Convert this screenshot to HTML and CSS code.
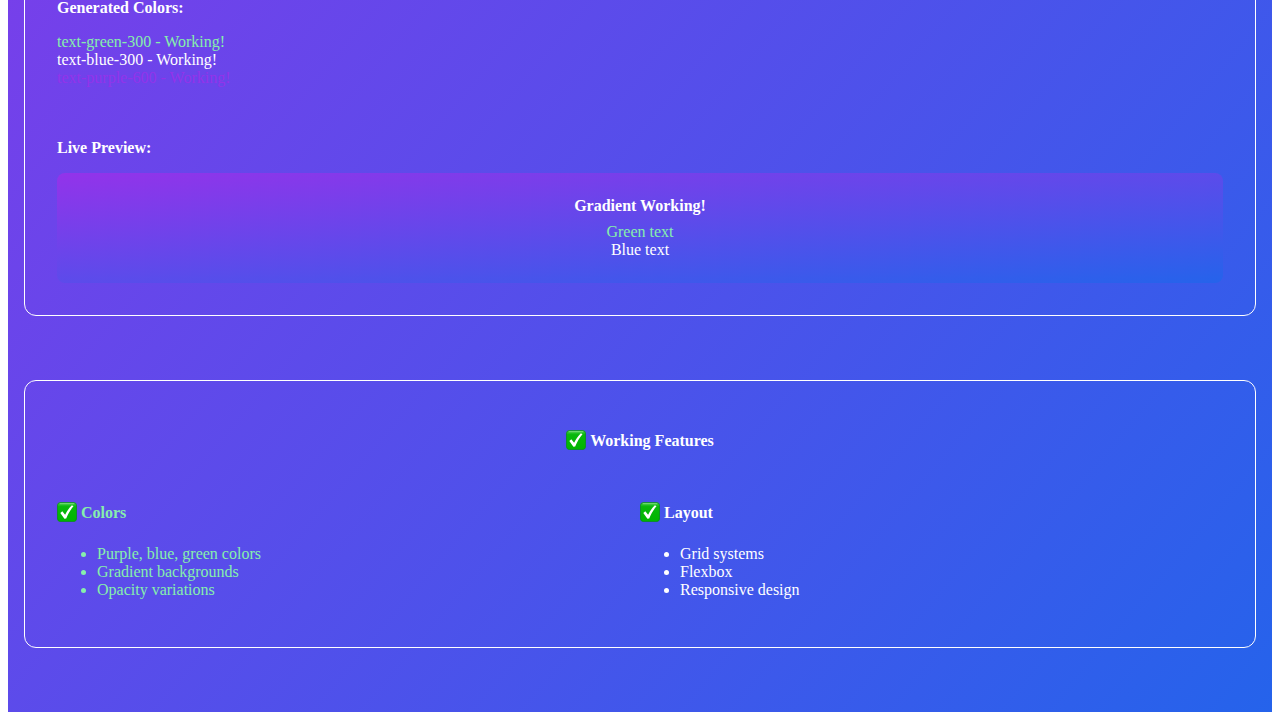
FILE: index.html
```html
<!DOCTYPE html>
<html lang="en">
<head>
<meta charset="utf-8">
<title>Working Features</title>
<link rel="stylesheet" href="styles.css">
</head>
<body>
<svg class="defs" aria-hidden="true">
  <defs>
    <linearGradient id="tile" x1="0" y1="0" x2="0" y2="1">
      <stop offset="0" stop-color="#4fd052"/>
      <stop offset=".22" stop-color="#08b80c"/>
      <stop offset="1" stop-color="#00b500"/>
    </linearGradient>
    <symbol id="check" viewBox="0 0 20 20">
      <rect x=".4" y=".4" width="19.2" height="19.2" rx="3.4" fill="url(#tile)" stroke="#078f16" stroke-width=".8"/>
      <path d="M3.2 1.7H16.8" stroke="#7bdc7b" stroke-width=".9" stroke-linecap="round"/>
      <path d="M3.3 11 5.3 9.3 8.1 12.7C9.9 9.1 12 6.1 14.9 3.2L16.5 4.3C13.4 7.8 11 11.9 9.2 16.6L7.4 16.7Z" fill="#fff"/>
    </symbol>
  </defs>
</svg>
<main class="page">
  <section class="card card-demo">
    <h4 class="title">Generated Colors:</h4>
    <div class="samples">
      <div class="green">text-green-300 - Working!</div>
      <div>text-blue-300 - Working!</div>
      <div class="purple">text-purple-600 - Working!</div>
    </div>
    <h4 class="title">Live Preview:</h4>
    <div class="preview">
      <div class="preview-title">Gradient Working!</div>
      <div class="green">Green text</div>
      <div>Blue text</div>
    </div>
  </section>
  <section class="card card-features">
    <h3 class="heading heading-center"><svg class="icon"><use href="#check"/></svg>Working Features</h3>
    <div class="columns">
      <div class="green">
        <h4 class="heading"><svg class="icon"><use href="#check"/></svg>Colors</h4>
        <ul class="list">
          <li>Purple, blue, green colors</li>
          <li>Gradient backgrounds</li>
          <li>Opacity variations</li>
        </ul>
      </div>
      <div>
        <h4 class="heading"><svg class="icon"><use href="#check"/></svg>Layout</h4>
        <ul class="list">
          <li>Grid systems</li>
          <li>Flexbox</li>
          <li>Responsive design</li>
        </ul>
      </div>
    </div>
  </section>
</main>
</body>
</html>
```
FILE: styles.css
```css
html {
  background: #fff;
}
body {
  margin: 0 8px 8px;
  overflow: hidden;
  font: 16px/18px "Liberation Serif", "Times New Roman", serif;
  color: #fff;
}
.defs {
  display: block;
  width: 0;
  height: 0;
}
.page {
  box-sizing: border-box;
  height: 712px;
  overflow: hidden;
  display: flex;
  flex-direction: column;
  justify-content: flex-end;
  gap: 64px;
  padding: 0 16px 64px;
  background: linear-gradient(to bottom right, #9333ea, #2563eb) bottom / 100% 1500px no-repeat;
}
.card {
  box-sizing: border-box;
  flex: none;
  border: 1px solid #fff;
  border-radius: 12px;
  padding: 32px;
}
.card-features {
  height: 268px;
  padding-top: 51px;
}
.title {
  margin: 0 0 16px;
  font-size: 16px;
}
.samples {
  margin-bottom: 52px;
}
.green {
  color: #86efac;
}
.purple {
  color: #9333ea;
}
.preview {
  padding: 24px;
  border-radius: 8px;
  text-align: center;
  background: linear-gradient(to bottom right, #9333ea, #2563eb);
}
.preview-title {
  margin-bottom: 8px;
  font-weight: bold;
}
.heading {
  display: flex;
  align-items: center;
  gap: 4px;
  height: 18px;
  margin: 0;
  font-size: 16px;
}
.heading-center {
  justify-content: center;
  margin-bottom: 54px;
}
.icon {
  width: 20px;
  height: 20px;
  margin-bottom: 2px;
  flex: none;
}
.columns {
  display: grid;
  grid-template-columns: 1fr 1fr;
}
.list {
  margin: 23px 0 0;
  padding-left: 40px;
}
```
